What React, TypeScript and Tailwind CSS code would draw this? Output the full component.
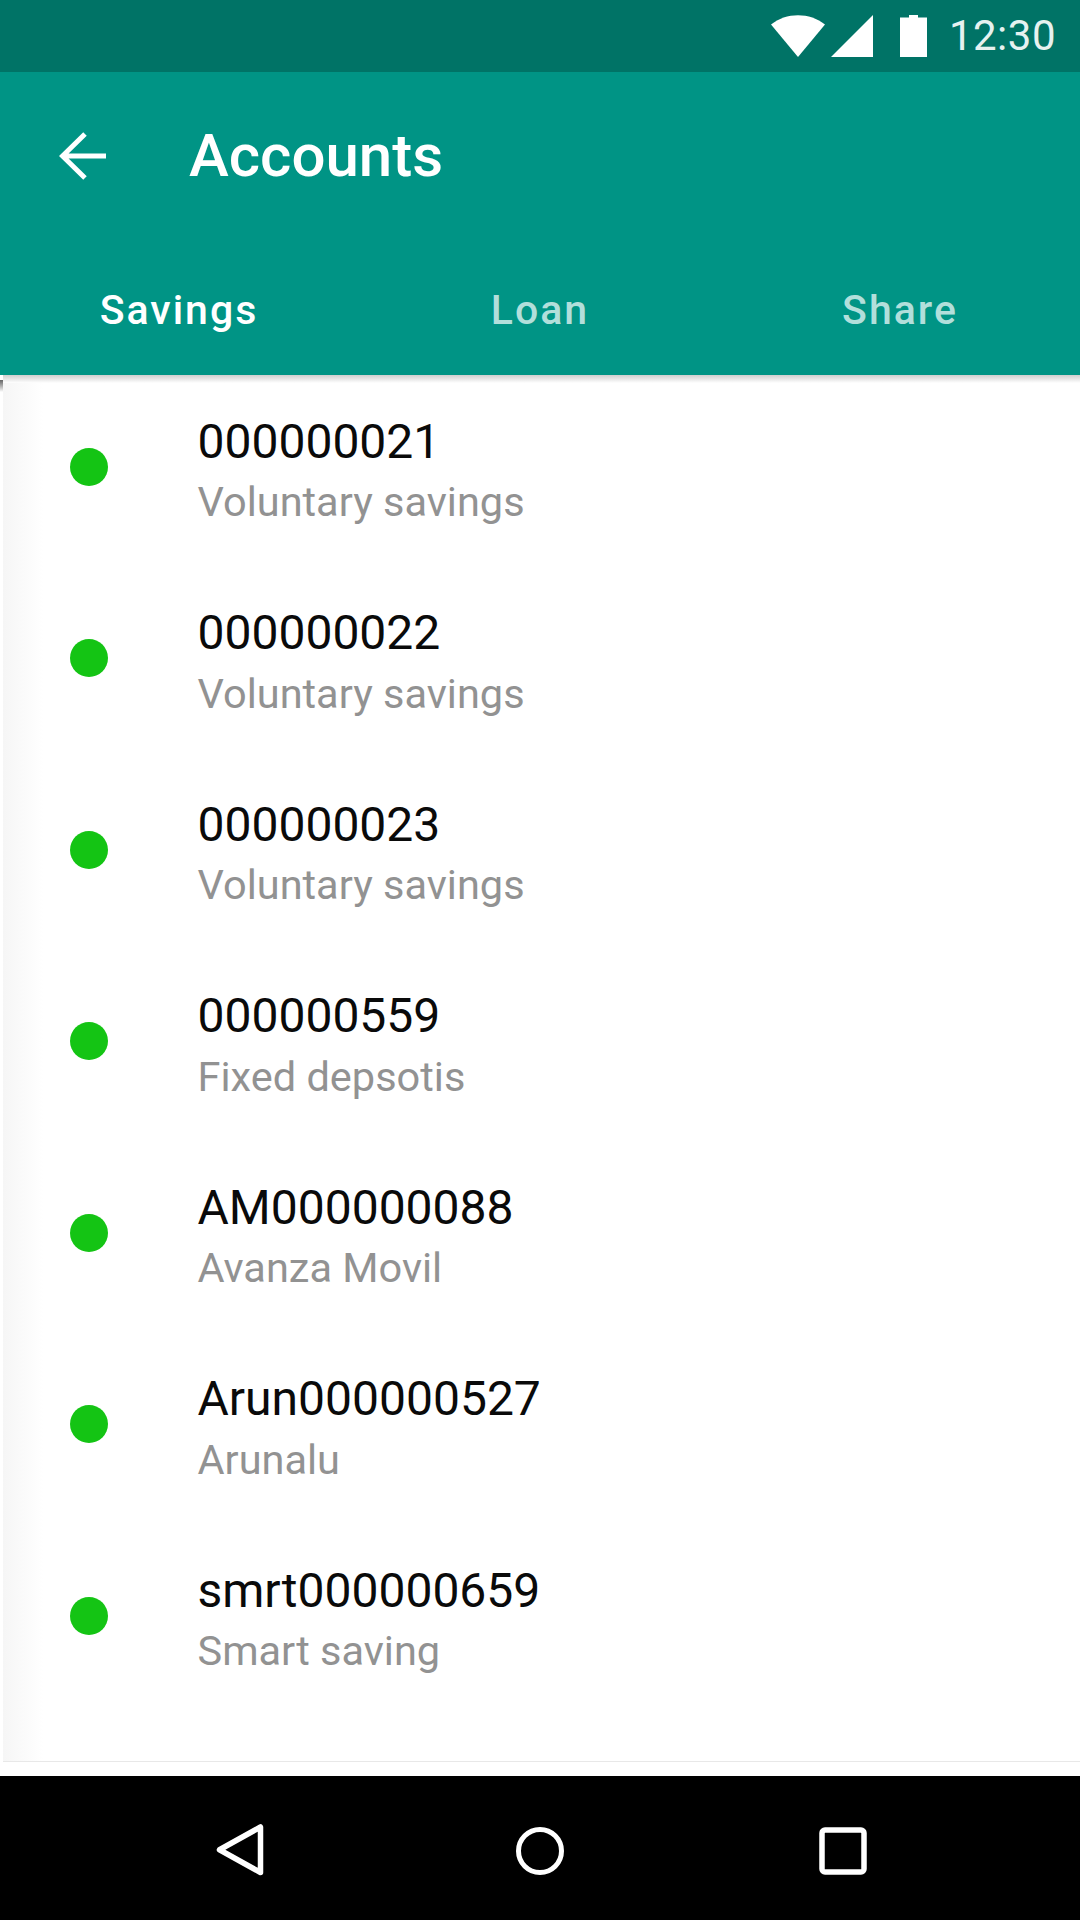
const rows = [
  ["000000021", "Voluntary savings"],
  ["000000022", "Voluntary savings"],
  ["000000023", "Voluntary savings"],
  ["000000559", "Fixed depsotis"],
  ["AM000000088", "Avanza Movil"],
  ["Arun000000527", "Arunalu"],
  ["smrt000000659", "Smart saving"],
];

export default function App() {
  return (
    <div className="w-[1080px] h-[1920px] flex flex-col bg-white overflow-hidden font-['Roboto',sans-serif]">
      <div className="h-[72px] shrink-0 bg-[#007366] flex items-center justify-end pr-[24px]">
        <svg width="54" height="42" viewBox="0 0 54 42" className="mr-[6px]" aria-hidden="true">
          <path d="M0 9.5 C15 -3 39 -3 54 9.5 L27 42 Z" fill="#fff" />
        </svg>
        <svg width="42" height="42" viewBox="0 0 42 42" className="mr-[27px]" aria-hidden="true">
          <path d="M42 0 V42 H0 Z" fill="#fff" />
        </svg>
        <svg width="27" height="42" viewBox="0 0 27 42" className="mr-[22px]" aria-hidden="true">
          <path d="M9 0 H18 V2.5 H27 V42 H0 V2.5 H9 Z" fill="#fff" />
        </svg>
        <span className="text-[42px] leading-none text-[#e6f2f0] tracking-[0.5px]">12:30</span>
      </div>
      <div className="h-[303px] shrink-0 bg-[#009485] flex flex-col">
        <div className="h-[168px] flex items-center pl-[59px]">
          <svg width="48" height="48" viewBox="0 0 48 48" fill="none" aria-hidden="true">
            <path d="M47 24 H3 M26 2 L3.5 24 L26 46" stroke="#fff" strokeWidth="5" />
          </svg>
          <span className="ml-[82px] text-[60px] leading-none font-medium text-white">Accounts</span>
        </div>
        <div className="flex-1 grid grid-cols-3 text-[41px] leading-none font-medium tracking-[2px]">
          <div className="flex justify-center pt-[50px] pr-[2px] text-white">Savings</div>
          <div className="flex justify-center pt-[50px] text-[#b2dfdb]">Loan</div>
          <div className="flex justify-center pt-[50px] text-[#b2dfdb]">Share</div>
        </div>
      </div>
      <div className="relative flex-1">
        <div className="absolute inset-x-0 top-0 h-[8px] bg-gradient-to-b from-[#cfcfcf] to-white" />
        <div className="absolute left-0 top-0 w-[3px] h-[20px] bg-white" />
        <div className="absolute left-0 top-[5px] w-[3px] h-[12px] bg-gradient-to-b from-[#666666] to-white" />
        <div className="absolute left-[3px] top-[8px] h-[1378px] w-[40px] bg-gradient-to-r from-[#f6f6f6] to-white" />
        <div className="relative flex flex-col -mt-[4px]">
          {rows.map(([title, sub]) => (
            <div key={title} className="h-[191.5px] flex items-center pl-[69.5px]">
              <div className="w-[38px] h-[38px] rounded-full bg-[#14c414] shrink-0" />
              <div className="ml-[90px] flex flex-col mt-[10px]">
                <span className="text-[48px] leading-[54px] text-[#0a0a0a]">{title}</span>
                <span className="mt-[6.5px] text-[41.5px] leading-[54px] text-[#929292]">{sub}</span>
              </div>
            </div>
          ))}
        </div>
        <div className="absolute left-[3px] right-0 top-[1386px] h-[1px] bg-[#e8e8e8]" />
      </div>
      <div className="h-[144px] shrink-0 bg-black flex items-center relative">
        <svg width="48" height="54" viewBox="0 0 48 54" fill="none" className="absolute left-[216px] top-[46px]" aria-hidden="true">
          <path d="M44.5 5 V50.5 L3.5 27.75 Z" stroke="#fff" strokeWidth="5.5" strokeLinejoin="round" />
        </svg>
        <svg width="48" height="48" viewBox="0 0 48 48" fill="none" className="absolute left-[516px] top-[51px]" aria-hidden="true">
          <circle cx="24" cy="24" r="21.5" stroke="#fff" strokeWidth="5" />
        </svg>
        <svg width="48" height="48" viewBox="0 0 48 48" fill="none" className="absolute left-[819px] top-[51px]" aria-hidden="true">
          <rect x="3" y="3" width="42" height="42" rx="3" stroke="#fff" strokeWidth="5.5" />
        </svg>
      </div>
    </div>
  );
}
